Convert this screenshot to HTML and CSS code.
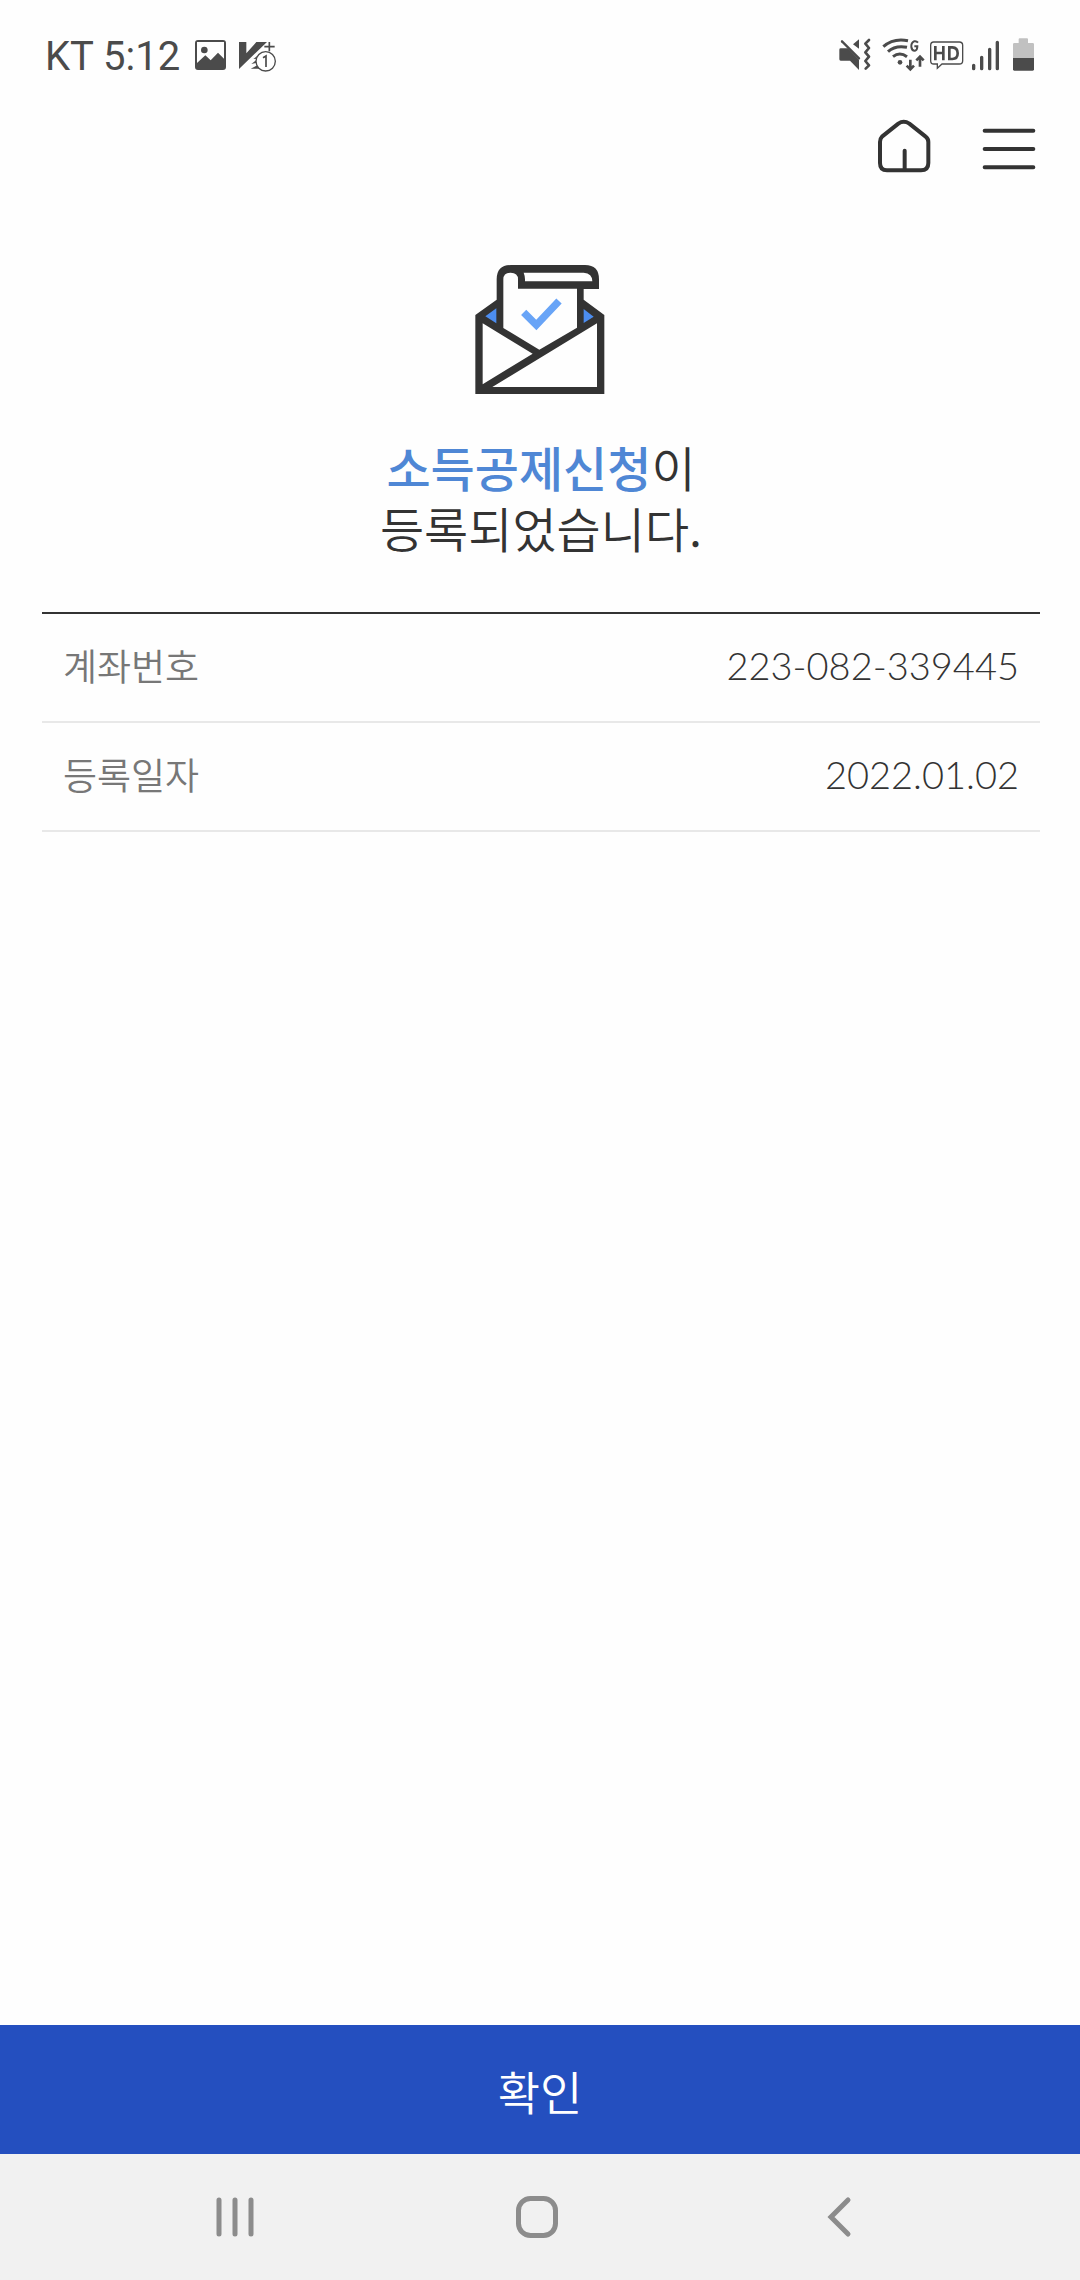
FILE: index.html
```html
<!DOCTYPE html>
<html lang="ko">
<head>
  <meta charset="UTF-8" />
  <meta name="viewport" content="width=device-width, initial-scale=1.0" />
  <title>소득공제신청</title>
  <link rel="stylesheet" href="styles.css">
</head>
<body>
  <div class="status-bar">
    <span class="status-text">KT 5:12</span>
    <svg class="status-photo" viewBox="492 51 99 108" width="33" height="36">
      <path fill="#4b4b4b" fill-rule="evenodd" d="M504 60h75q9 0 9 9v72q0 9-9 9h-75q-9 0-9-9V69q0-9 9-9zM501 66v63l25-23 16 15 22-23 18 18V66z"/>
      <circle cx="523" cy="90" r="10" fill="#4b4b4b"/>
    </svg>
    <svg class="status-vaccine" viewBox="624 51 117 108" width="39" height="36">
      <path fill="#4b4b4b" d="M627 66h22v34l30-34h32l-84 81zM662 146l26-13v13zM664 132l18-14v10zM670 117l12-9v8z"/>
      <path stroke="#4b4b4b" stroke-width="5" d="M703 80h31M718 66v28"/>
      <circle cx="707" cy="124" r="29" fill="#fff" stroke="#4b4b4b" stroke-width="4"/>
      <path fill="none" stroke="#4b4b4b" stroke-width="5" d="M699 113l9-5v33"/>
    </svg>
    <div class="status-icons">
      <svg viewBox="54 51 114 108" width="38" height="36">
        <path fill="#4b4b4b" d="M62 85h22l33 34v31l-27-28H62q-4 0-4-4V89q0-4 4-4zM117 58v28L99 73z"/>
        <path fill="none" stroke="#4b4b4b" stroke-width="7" stroke-linecap="round" stroke-linejoin="round" d="M66 64l51 51"/>
        <path fill="none" stroke="#4b4b4b" stroke-width="8" stroke-linecap="round" stroke-linejoin="round" d="M147 60l-11 11 11 13-11 13 11 13-11 13 11 13-10 10"/>
      </svg>
      <svg viewBox="180 51 135 108" width="45" height="36">
        <g fill="none" stroke="#4b4b4b" stroke-width="9">
          <path d="M190 80q30-27 74-18M204 95q22-20 57-13M219 110q20-16 42 0"/>
          <path stroke-width="6" d="M294 68q-5-6-12-4-9 4-8 17 2 12 11 11 7-1 7-13h-9"/>
          <path stroke-width="8" d="M271 119v28M260 137l11 11 11-11M300 140v-28M289 121l11-11 11 11"/>
        </g>
        <circle cx="240" cy="127" r="7" fill="#4b4b4b"/>
      </svg>
      <svg viewBox="327 51 108 108" width="36" height="36">
        <path fill="none" stroke="#4b4b4b" stroke-width="4" d="M341 66h77q10 0 10 10v46q0 10-10 10h-52l-14 13v-13h-11q-9 0-9-10V76q0-10 9-10z"/>
        <path fill="none" stroke="#4b4b4b" stroke-width="8" d="M346 78v43M370 78v43M346 99h24M388 82v35h9q16 0 16-17t-16-18z"/>
      </svg>
      <svg viewBox="447 51 111 108" width="37" height="36">
        <path stroke="#4b4b4b" stroke-width="10" stroke-linecap="round" d="M461 136v10M485 112v34M509 88v58M532 67v79"/>
      </svg>
      <svg viewBox="570 51 75 108" width="25" height="36">
        <path fill="#c1c1c1" d="M579 114V73q0-4 4-4h13V58q0-3 3-3h22q3 0 3 3v11h14q4 0 4 4v41z"/>
        <path fill="#4b4b4b" d="M579 114h63v34q0 4-4 4h-55q-4 0-4-4z"/>
      </svg>
    </div>
  </div>

  <header class="header">
    <button class="icon-btn" aria-label="홈">
      <svg viewBox="81 57 162 162" width="54" height="54">
        <path fill="none" stroke="#333" stroke-width="12" stroke-linejoin="round" d="M96 110l49-39q16-11 33 0l49 39q8 6 8 16v63q0 22-22 22H111q-21 0-21-22v-63q0-10 6-16z"/>
        <path stroke="#333" stroke-width="12" stroke-linecap="round" d="M164 152v56"/>
      </svg>
    </button>
    <button class="icon-btn" aria-label="메뉴">
      <svg viewBox="396 57 162 162" width="54" height="54">
        <path stroke="#333" stroke-width="12" stroke-linecap="round" d="M404 92h146M404 147h146M404 202h146"/>
      </svg>
    </button>
  </header>

  <main class="content">
    <div class="result">
      <svg class="result-icon" viewBox="45 42 396 396" width="132" height="132">
        <path fill="#333" fill-rule="evenodd" d="M46 195l64-46V88q0-43 43-43h222q42 0 42 43v29h-46v32l62 46v237H46zM130 234V88q0-20 22-20t22 20v28h177v117l-113 66zM191 68h180q26 2 26 26H195q1-14-4-26zM68 220l150 91-150 92zM411 220v191H97z"/>
        <path fill="#4c8df0" d="M109 175v45l-33-21zM371 177v42l30-19z"/>
        <path fill="none" stroke="#68a4f7" stroke-width="22" d="M191 187l38 38 68-72"/>
      </svg>
      <h1 class="result-title"><strong>소득공제신청</strong>이<br>등록되었습니다.</h1>
    </div>

    <table class="info">
      <tr>
        <th scope="row">계좌번호</th>
        <td>223-082-339445</td>
      </tr>
      <tr>
        <th scope="row">등록일자</th>
        <td>2022.01.02</td>
      </tr>
    </table>
  </main>

  <button class="confirm-btn">확인</button>

  <nav class="nav-bar">
    <button class="icon-btn" aria-label="최근 앱">
      <svg viewBox="0 0 42 42" width="42" height="42">
        <path stroke="#8c8c8c" stroke-width="5" stroke-linecap="round" d="M5 4v34M21 4v34M37 4v34"/>
      </svg>
    </button>
    <button class="icon-btn" aria-label="홈 화면">
      <svg viewBox="0 0 42 42" width="42" height="42">
        <rect x="2.5" y="2.5" width="37" height="37" rx="12" fill="none" stroke="#8c8c8c" stroke-width="5"/>
      </svg>
    </button>
    <button class="icon-btn" aria-label="뒤로">
      <svg viewBox="0 0 42 42" width="42" height="42">
        <path fill="none" stroke="#8c8c8c" stroke-width="5" stroke-linecap="round" d="M29 4L12 21l17 17"/>
      </svg>
    </button>
  </nav>
</body>
</html>
```
FILE: styles.css
```css
* { box-sizing: border-box; }
body { display: flex; flex-direction: column; min-height: 100vh; margin: 0; background: #fefefe; color: #333; font-family: "Noto Sans CJK KR", sans-serif; font-weight: 350; }
svg { display: block; }
button { border: 0; padding: 0; background: none; font: inherit; cursor: pointer; }

.status-bar { display: flex; align-items: center; height: 110px; padding: 0 45px; }
.status-text { padding-top: 4px; font-family: Roboto, sans-serif; font-size: 40px; font-weight: 400; line-height: 48px; color: #4b4b4b; }
.status-photo { margin-left: 14px; }
.status-vaccine { margin-left: 11px; }
.status-icons { display: flex; gap: 4px; margin-left: auto; }

.header { display: flex; justify-content: flex-end; align-items: center; gap: 51px; height: 72px; padding: 0 44px; }

.content { flex: 1; padding: 82px 40px 0 42px; }
.result { display: flex; flex-direction: column; align-items: center; }
.result-title { margin: 40px 0 54px; font-size: 48px; font-weight: 350; line-height: 61px; text-align: center; }
.result-title strong { font-weight: 500; color: #4f87d5; }

.info { width: 100%; border-top: 2px solid #333; border-spacing: 0; }
.info th, .info td { height: 109px; padding: 0 21px 6px; border-bottom: 2px solid #e8e8e8; }
.info th { font-size: 37px; font-weight: 350; text-align: left; color: #777; }
.info td { font-family: Lato, "Noto Sans CJK KR", sans-serif; font-size: 38px; font-weight: 300; text-align: right; }

.confirm-btn { height: 129px; background: #244fbf; color: #fff; font-size: 46px; }

.nav-bar { display: grid; grid-template-columns: repeat(3, 1fr); height: 126px; padding: 0 89px 0 84px; background: #f1f1f1; }
.nav-bar .icon-btn { display: flex; justify-content: center; align-items: center; }
```
